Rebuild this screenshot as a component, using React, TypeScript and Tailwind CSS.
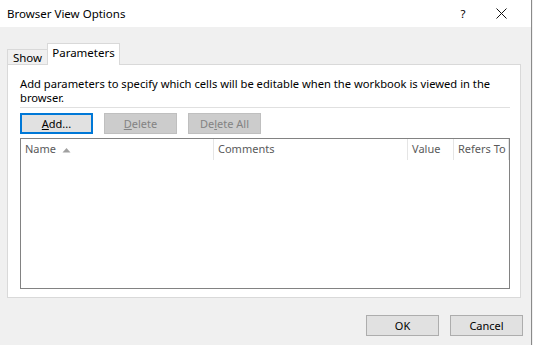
import * as React from 'react';

const font = { fontFamily: '"Noto Sans", "Open Sans", sans-serif' };

const Btn = ({
  children,
  disabled,
  primary,
  className = '',
}: {
  children: React.ReactNode;
  disabled?: boolean;
  primary?: boolean;
  className?: string;
}) => (
  <div
    className={
      'flex items-center justify-center text-[11px] leading-none ' +
      (disabled
        ? 'bg-[#cccccc] border border-[#bfbfbf] text-[#838383] '
        : primary
        ? 'bg-[#e1e1e1] border-2 border-[#0078d7] text-black '
        : 'bg-[#e1e1e1] border border-[#adadad] text-black ') +
      className
    }
  >
    {children}
  </div>
);

const HeaderCell = ({ label, className = '', arrow }: { label: string; className?: string; arrow?: boolean }) => (
  <div className={'flex items-center h-full pl-[4px] border-r border-[#e5e5e5] text-[#5a5a5a] whitespace-nowrap ' + className}>
    <span>{label}</span>
    {arrow && (
      <svg width="9" height="6" viewBox="0 0 9 6" className="ml-[6px]">
        <path d="M0.5 5.5 L4.5 1 L8.5 5.5 Z" fill="#a0a0a0" />
      </svg>
    )}
  </div>
);

export default function App() {
  return (
    <div className="w-[533px] h-[345px] flex flex-col bg-[#f0f0f0] overflow-hidden" style={font}>
      <div className="w-[532px] h-full flex flex-col border-r border-[#8a8a8a]">
        {/* title bar */}
        <div className="h-[27px] bg-white flex items-center text-[11.5px] text-black">
          <span className="pl-[7px] flex-1">Browser View Options</span>
          <span className="w-[10px] mr-[28px] text-center">?</span>
          <svg width="11" height="11" viewBox="0 0 11 11" className="mr-[24px]">
            <path d="M0.5 0.5 L10.5 10.5 M10.5 0.5 L0.5 10.5" stroke="#111" strokeWidth="1" />
          </svg>
        </div>

        <div className="flex flex-col pl-[7px] pr-[10px] pt-[16px]">
          {/* tabs */}
          <div className="flex items-end h-[21px] text-[11.5px]">
            <div className="h-[15px] w-[41px] flex items-center justify-center bg-[#f0f0f0] border border-b-0 border-[#d9d9d9] -mr-px pt-px">
              Show
            </div>
            <div className="h-[22px] w-[73px] flex items-center justify-center bg-white border border-b-0 border-[#d9d9d9] relative z-10 -mb-px pb-[3px]">
              Parameters
            </div>
          </div>

          {/* panel */}
          <div className="h-[234px] bg-white border border-[#d9d9d9] flex flex-col pl-[12px] pr-[10px] pt-[12px]">
            <p className="text-[11.2px] leading-[14px] text-black">
              Add parameters to specify which cells will be editable when the workbook is viewed in the browser.
            </p>
            <div className="h-px bg-[#e0e0e0] mt-[2px]" />
            <div className="flex gap-[11px] mt-[5px]">
              <Btn primary className="w-[73px] h-[21px]">
                <span><u>A</u>dd...</span>
              </Btn>
              <Btn disabled className="w-[73px] h-[21px]">
                <span><u>D</u>elete</span>
              </Btn>
              <Btn disabled className="w-[73px] h-[21px]">
                <span>De<u>l</u>ete All</span>
              </Btn>
            </div>
            <div className="mt-[4px] h-[151px] border border-[#828282] flex flex-col">
              <div className="flex h-[21px] text-[11px]">
                <HeaderCell label="Name" arrow className="w-[193px]" />
                <HeaderCell label="Comments" className="w-[194px]" />
                <HeaderCell label="Value" className="w-[46px]" />
                <HeaderCell label="Refers To" className="w-[55px]" />
              </div>
            </div>
          </div>

          {/* footer buttons */}
          <div className="flex justify-end gap-[11px] mt-[17px] -mr-[2px]">
            <Btn className="w-[73px] h-[21px]">OK</Btn>
            <Btn className="w-[73px] h-[21px]">Cancel</Btn>
          </div>
        </div>
      </div>
    </div>
  );
}
